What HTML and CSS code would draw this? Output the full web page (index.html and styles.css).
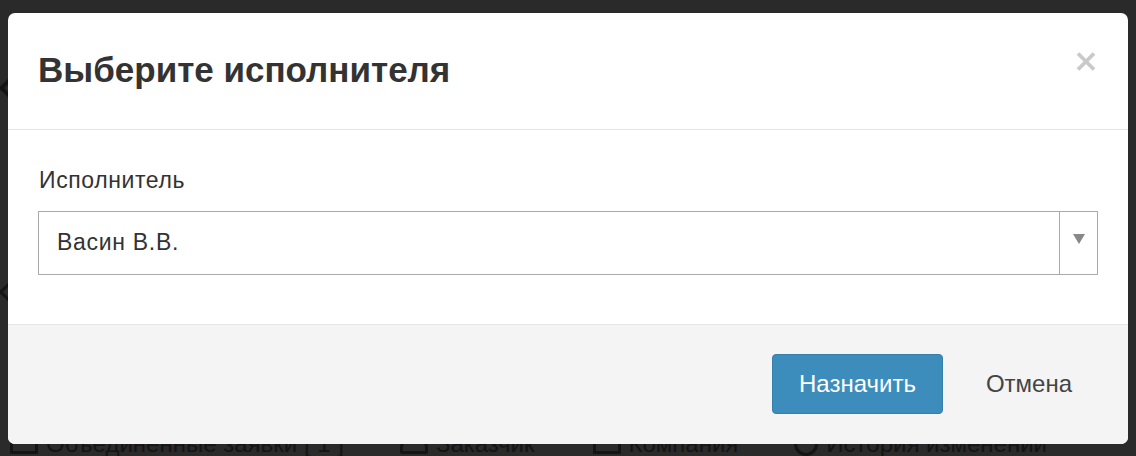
FILE: index.html
```html
<!DOCTYPE html>
<html lang="ru">
<head>
<meta charset="utf-8">
<title>Выберите исполнителя</title>
<link rel="stylesheet" href="styles.css">
</head>
<body>
<div class="page">
  <div class="page-side">
    <span class="side-chevron side-chevron-a"></span>
    <span class="side-chevron side-chevron-b"></span>
  </div>
  <div class="tabs">
    <span class="tab tab-1"><span class="tab-ico ico-box"></span>Объединенные заявки [ 1 ]</span>
    <span class="tab tab-2"><span class="tab-ico ico-user"></span>Заказчик</span>
    <span class="tab tab-3"><span class="tab-ico ico-box"></span>Компания</span>
    <span class="tab tab-4"><span class="tab-ico ico-clock"></span>История изменений</span>
  </div>
</div>

<div class="modal">
  <div class="modal-header">
    <h4 class="modal-title">Выберите исполнителя</h4>
    <button class="close" type="button" aria-label="Закрыть">
      <svg width="20" height="19" viewBox="0 0 20 19"><path d="M2 1.5 L18 17.5 M18 1.5 L2 17.5" stroke="#c9c9c9" stroke-width="3.8" stroke-linecap="butt"/></svg>
    </button>
  </div>
  <div class="modal-body">
    <label class="field-label">Исполнитель</label>
    <div class="select">
      <span class="select-value">Васин В.В.</span>
      <span class="select-arrow">
        <svg width="12" height="10" viewBox="0 0 12 10"><path d="M0 0 H12 L6 10 Z" fill="#888"/></svg>
      </span>
    </div>
  </div>
  <div class="modal-footer">
    <button class="btn btn-primary" type="button">Назначить</button>
    <button class="btn btn-link" type="button">Отмена</button>
  </div>
</div>
</body>
</html>
```

FILE: styles.css
```css
* { box-sizing: border-box; }
html, body {
  margin: 0;
  padding: 0;
  width: 1136px;
  height: 456px;
  overflow: hidden;
  background: #2a2a2a;
  font-family: "Liberation Sans", Arial, sans-serif;
}

.page {
  position: relative;
  height: 456px;
  display: flex;
  flex-direction: column;
  justify-content: flex-end;
}
.page-side {
  position: absolute;
  left: 0;
  top: 0;
  width: 8px;
  height: 456px;
  overflow: hidden;
}
.side-chevron {
  position: absolute;
  left: 2px;
  width: 16px;
  height: 16px;
  border-left: 4px solid #141414;
  border-bottom: 4px solid #141414;
  transform: rotate(45deg);
}
.side-chevron-a { top: 80px; }
.side-chevron-b { top: 284px; border-width: 3px; }

.tabs {
  display: flex;
  height: 12px;
  overflow: visible;
  color: #141414;
  font-size: 24px;
  line-height: 24px;
  white-space: nowrap;
  position: relative;
  top: -6px;
}
.tab { display: inline-flex; align-items: center; }
.tab-1 { margin-left: 10px; }
.tab-2 { margin-left: 56px; }
.tab-3 { margin-left: 58px; }
.tab-4 { margin-left: 56px; }
.tab-ico {
  display: inline-block;
  width: 28px;
  height: 20px;
  margin-right: 8px;
  border: 3px solid #141414;
}
.ico-user { border-radius: 14px 14px 2px 2px; }
.ico-clock { border-radius: 50%; width: 24px; height: 24px; }

.modal {
  position: absolute;
  left: 8px;
  top: 13px;
  width: 1120px;
  height: 431px;
  background: #fff;
  border-radius: 7px;
  overflow: hidden;
  display: flex;
  flex-direction: column;
}

.modal-header {
  height: 117px;
  padding: 0 30px;
  border-bottom: 1px solid #e5e5e5;
  display: flex;
  align-items: center;
  justify-content: space-between;
}
.modal-title {
  margin: 0;
  font-size: 35px;
  font-weight: bold;
  color: #333;
  line-height: 1.1;
  position: relative;
  top: -1px;
}
.close {
  background: none;
  border: 0;
  padding: 0;
  margin: 0 2px 0 0;
  align-self: flex-start;
  margin-top: 39px;
  width: 20px;
  height: 19px;
  display: block;
}
.close svg { display: block; }

.modal-body {
  height: 194px;
  padding: 37px 30px 0;
  display: flex;
  flex-direction: column;
}
.field-label {
  display: block;
  font-size: 23px;
  letter-spacing: 0.6px;
  line-height: 26px;
  color: #333;
  margin: 0 0 18px 1px;
}
.select {
  height: 64px;
  border: 1px solid #aaa;
  display: flex;
  align-items: stretch;
  background: #fff;
}
.select-value {
  flex: 1;
  display: flex;
  align-items: center;
  padding-left: 18px;
  font-size: 23px;
  letter-spacing: 0.7px;
  color: #333;
  padding-bottom: 1px;
}
.select-arrow {
  width: 38px;
  border-left: 1px solid #aaa;
  display: flex;
  align-items: flex-start;
  justify-content: center;
  padding-top: 22px;
}
.select-arrow svg { display: block; }

.modal-footer {
  flex: 1;
  background: #f4f4f4;
  border-top: 1px solid #e5e5e5;
  padding: 0 29px 0 30px;
  display: flex;
  align-items: center;
  justify-content: flex-end;
  gap: 16px;
}
.btn {
  font-family: inherit;
  font-size: 24px;
  height: 60px;
  padding: 0 26px;
  border-radius: 4px;
  cursor: pointer;
  position: relative;
  top: -1px;
}
.btn-primary {
  background: #3c8dbc;
  border: 1px solid #367fa9;
  color: #fff;
}
.btn-link {
  background: transparent;
  border: 1px solid transparent;
  color: #444;
}
```
